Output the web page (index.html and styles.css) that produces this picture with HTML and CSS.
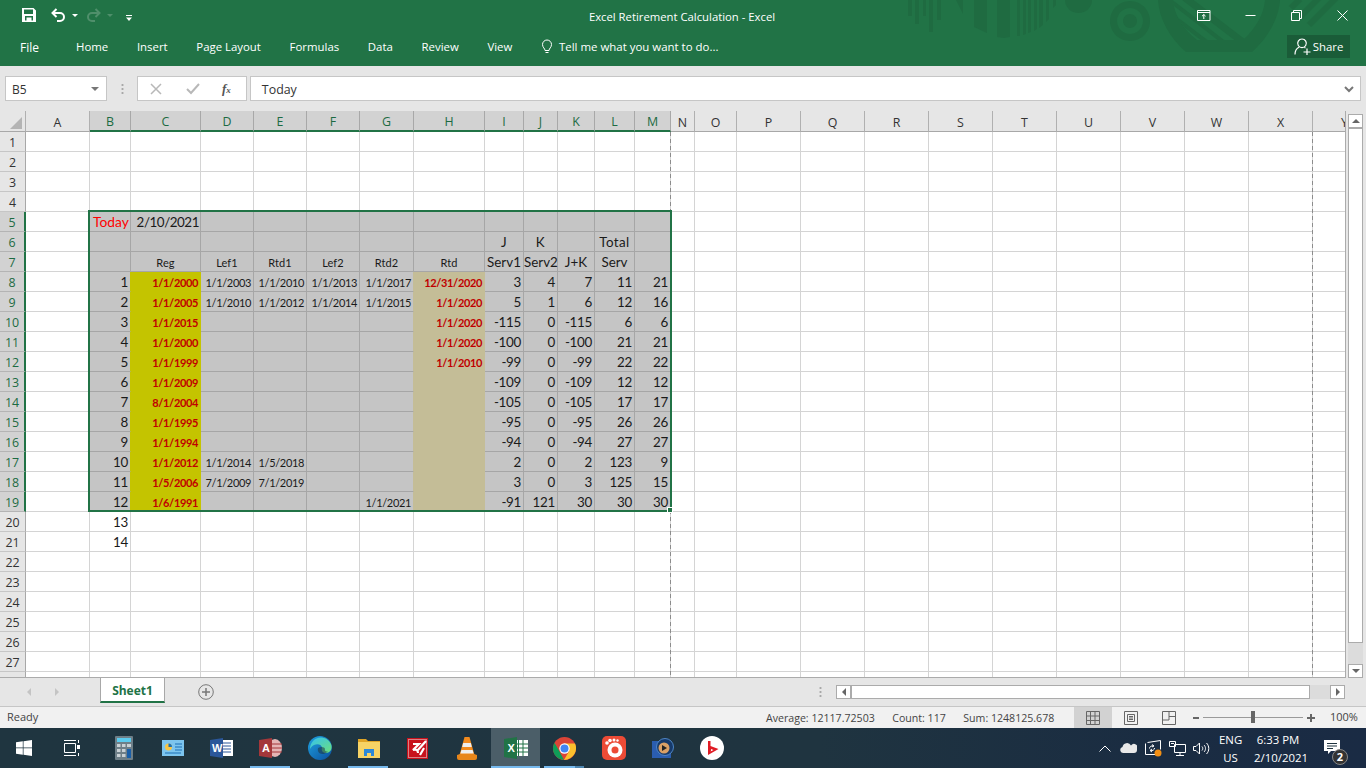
FILE: index.html
```html
<!DOCTYPE html>
<html lang="en">
<head>
<meta charset="utf-8">
<title>Excel Retirement Calculation - Excel</title>
<link rel="stylesheet" href="styles.css">
</head>
<body>
<header class="ribbon">
  <svg class="art" width="461" height="52" viewBox="905 0 461 52">
    <defs><clipPath id="inner"><path d="M1173 0h92c-1 14-9 28-22 40h-46c-14-11-23-25-24-40z"/></clipPath></defs>
    <g fill="#1f6b41">
      <rect x="908" width="4" height="16"/><rect x="915" width="4" height="24"/><rect x="923" width="3" height="16"/><rect x="929" width="4" height="32"/><rect x="937" width="4" height="20"/>
      <path d="M956 0h7v14z"/>
      <path d="M974 0h13v33l-13-6zM997 0h13v37l-6 1-7-1z"/>
      <path d="M1017 0h3v36h-3zM1023 0h3v34l-3 1zM1028 0h3v32l-3 1zM1034 0h3v29l-3 2zM1039 0h4v25l-4 3zM1046 0h3v19l-3 3zM1053 0h3v5l-3 3z"/>
      <path d="M1065 0h27a13.500 13 0 0 1-27 0z"/>
      <path fill-rule="evenodd" d="M1130 1a20 20 0 1 1-.01 0zM1130 8a13 13 0 1 0 .01 0zM1130 14a7 7 0 1 1-.01 0z"/>
      <path fill-rule="evenodd" d="M1158 0h122c-1 18-12 38-28 52h-66c-16-14-27-33-28-52zM1173 0c1 15 10 29 24 40h46c13-12 21-26 22-40z"/>
    </g>
    <g stroke="#1f6b41" fill="none" clip-path="url(#inner)">
      <path stroke-width="7" d="M1180-6l68 52"/>
      <path stroke-width="4" d="M1172 2l54 42"/>
      <path stroke-width="4" d="M1170 14l42 32"/>
    </g>
    <g stroke="#1f6b41" stroke-width="6" fill="none">
      <path d="M1291 8l9-9M1300 17l19-19M1309 25l28-28"/>
    </g>
  </svg>
  <div class="titlebar">
    <div class="qat">
      <svg width="14" height="14" viewBox="0 0 14 14"><path fill="#fff" fill-rule="evenodd" d="M0 0h11.500L14 2.500V14H0zM2 1.500v4.500h9V1.500zM3 8v4.500h1.500V9.500h5v3H11V8z"/></svg>
      <svg class="undo" width="14" height="14" viewBox="0 0 14 14"><path fill="none" stroke="#fff" stroke-width="2" d="M5.500 1L1.500 5l4 4M2 5h7a4 4 0 0 1 0 8H6"/></svg>
      <span class="caret"></span>
      <svg class="redo" width="14" height="14" viewBox="0 0 14 14"><path fill="none" stroke="#4f8f6b" stroke-width="2" d="M8.500 1l4 4-4 4M12 5H5a4 4 0 0 0 0 8h3"/></svg>
      <span class="caret dim"></span>
      <svg class="more" width="6" height="6" viewBox="0 0 6 6"><path fill="#fff" d="M0 0h6v1H0zM0 2.500h6L3 6z"/></svg>
    </div>
    <div class="doc-title">Excel Retirement Calculation - Excel</div>
    <div class="win">
      <svg class="w-disp" width="14" height="11" viewBox="0 0 14 11"><path fill="none" stroke="#fff" d="M.5.500h12.500v10H.5zM.5 2.500h12.500M6.800 9V4.500M5 6.200l1.800-1.700 1.800 1.700"/></svg>
      <svg width="11" height="11" viewBox="0 0 11 11"><path stroke="#fff" d="M.5 5.500h10"/></svg>
      <svg width="11" height="11" viewBox="0 0 11 11"><path fill="none" stroke="#fff" d="M.5 2.500h8v8h-8zM2.500 2.500V.5h8v8h-2"/></svg>
      <svg width="11" height="11" viewBox="0 0 11 11"><path stroke="#fff" d="M.5.500l10 10M10.500.5l-10 10"/></svg>
    </div>
  </div>
  <nav class="tabs">
    <span class="file">File</span>
    <span>Home</span><span>Insert</span><span>Page Layout</span><span>Formulas</span><span>Data</span><span>Review</span><span>View</span>
    <span class="tell">
      <svg width="12" height="16" viewBox="0 0 12 16"><path fill="none" stroke="#fff" d="M4 11.500c0-2-2.500-3-2.500-6a4.500 4.500 0 0 1 9 0c0 3-2.500 4-2.500 6zM4.500 13.500h3"/></svg>
      Tell me what you want to do...
    </span>
    <span class="share">
      <svg width="17" height="17" viewBox="0 0 17 17"><path fill="none" stroke="#fff" stroke-width="1.200" d="M8 1a4.300 4.300 0 1 1-.01 0zM1 16.500c0-4 1.500-6 4-7.200M10.500 9.500l1 .5M9.500 14h7M13 10.500v6.500"/></svg>
      Share
    </span>
  </nav>
</header>

<section class="formula">
  <div class="namebox">B5<span class="nb-caret"></span></div>
  <div class="dots"></div>
  <div class="fx-box">
    <svg width="12" height="12" viewBox="0 0 12 12"><path fill="none" stroke="#b8b8b8" stroke-width="1.500" d="M1 1l10 10M11 1L1 11"/></svg>
    <svg width="14" height="12" viewBox="0 0 14 12"><path fill="none" stroke="#b8b8b8" stroke-width="2" d="M1 6l4 4 8-9"/></svg>
    <i class="fx">f<small>x</small></i>
  </div>
  <div class="input">Today<svg width="10" height="7" viewBox="0 0 10 7"><path fill="none" stroke="#777" stroke-width="2" d="M1 1l4 4 4-4"/></svg></div>
</section>

<main class="work">
  <div class="sheet">
    <table>
      <colgroup><col class="w26"><col class="w64"><col class="w41"><col class="w70"><col class="w53"><col class="w53"><col class="w53"><col class="w54"><col class="w71"><col class="w39"><col class="w34"><col class="w37"><col class="w40"><col class="w36"><col class="w24"><col class="w42"><col class="w64"><col class="w64"><col class="w64"><col class="w64"><col class="w64"><col class="w64"><col class="w64"><col class="w64"><col class="w64"><col class="w64"></colgroup>
      <thead>
        <tr><th class="corner"><span class="tri"></span></th><th>A</th><th class="on">B</th><th class="on">C</th><th class="on">D</th><th class="on">E</th><th class="on">F</th><th class="on">G</th><th class="on">H</th><th class="on">I</th><th class="on">J</th><th class="on">K</th><th class="on">L</th><th class="on">M</th><th>N</th><th>O</th><th>P</th><th>Q</th><th>R</th><th>S</th><th>T</th><th>U</th><th>V</th><th>W</th><th>X</th><th>Y</th></tr>
      </thead>
      <tbody>
        <tr><th>1<td><td><td><td><td><td><td><td><td><td><td><td><td><td><td><td><td><td><td><td><td><td><td><td><td></tr>
        <tr><th>2<td><td><td><td><td><td><td><td><td><td><td><td><td><td><td><td><td><td><td><td><td><td><td><td><td></tr>
        <tr><th>3<td><td><td><td><td><td><td><td><td><td><td><td><td><td><td><td><td><td><td><td><td><td><td><td><td></tr>
        <tr><th>4<td><td><td><td><td><td><td><td><td><td><td><td><td><td><td><td><td><td><td><td><td><td><td><td><td></tr>
        <tr class="s"><th>5<td><td class="today">Today<td class="big">2/10/2021<td><td><td><td><td><td><td><td><td><td><td><td><td><td><td><td><td><td><td><td><td></tr>
        <tr class="s"><th>6<td><td><td><td><td><td><td><td><td class="c">J<td class="c">K<td><td class="c">Total<td><td><td><td><td><td><td><td><td><td><td><td><td></tr>
        <tr class="s h"><th>7<td><td><td class="c">Reg<td class="c">Lef1<td class="c">Rtd1<td class="c">Lef2<td class="c">Rtd2<td class="c">Rtd<td class="c">Serv1<td class="c">Serv2<td class="c">J+K<td class="c">Serv<td><td><td><td><td><td><td><td><td><td><td><td><td></tr>
        <tr class="s d"><th>8<td><td>1<td>1/1/2000<td>1/1/2003<td>1/1/2010<td>1/1/2013<td>1/1/2017<td>12/31/2020<td>3<td>4<td>7<td>11<td>21<td><td><td><td><td><td><td><td><td><td><td><td><td></tr>
        <tr class="s d"><th>9<td><td>2<td>1/1/2005<td>1/1/2010<td>1/1/2012<td>1/1/2014<td>1/1/2015<td>1/1/2020<td>5<td>1<td>6<td>12<td>16<td><td><td><td><td><td><td><td><td><td><td><td><td></tr>
        <tr class="s d"><th>10<td><td>3<td>1/1/2015<td><td><td><td><td>1/1/2020<td>-115<td>0<td>-115<td>6<td>6<td><td><td><td><td><td><td><td><td><td><td><td><td></tr>
        <tr class="s d"><th>11<td><td>4<td>1/1/2000<td><td><td><td><td>1/1/2020<td>-100<td>0<td>-100<td>21<td>21<td><td><td><td><td><td><td><td><td><td><td><td><td></tr>
        <tr class="s d"><th>12<td><td>5<td>1/1/1999<td><td><td><td><td>1/1/2010<td>-99<td>0<td>-99<td>22<td>22<td><td><td><td><td><td><td><td><td><td><td><td><td></tr>
        <tr class="s d"><th>13<td><td>6<td>1/1/2009<td><td><td><td><td><td>-109<td>0<td>-109<td>12<td>12<td><td><td><td><td><td><td><td><td><td><td><td><td></tr>
        <tr class="s d"><th>14<td><td>7<td>8/1/2004<td><td><td><td><td><td>-105<td>0<td>-105<td>17<td>17<td><td><td><td><td><td><td><td><td><td><td><td><td></tr>
        <tr class="s d"><th>15<td><td>8<td>1/1/1995<td><td><td><td><td><td>-95<td>0<td>-95<td>26<td>26<td><td><td><td><td><td><td><td><td><td><td><td><td></tr>
        <tr class="s d"><th>16<td><td>9<td>1/1/1994<td><td><td><td><td><td>-94<td>0<td>-94<td>27<td>27<td><td><td><td><td><td><td><td><td><td><td><td><td></tr>
        <tr class="s d"><th>17<td><td>10<td>1/1/2012<td>1/1/2014<td>1/5/2018<td><td><td><td>2<td>0<td>2<td>123<td>9<td><td><td><td><td><td><td><td><td><td><td><td><td></tr>
        <tr class="s d"><th>18<td><td>11<td>1/5/2006<td>7/1/2009<td>7/1/2019<td><td><td><td>3<td>0<td>3<td>125<td>15<td><td><td><td><td><td><td><td><td><td><td><td><td></tr>
        <tr class="s d"><th>19<td><td>12<td>1/6/1991<td><td><td><td>1/1/2021<td><td>-91<td>121<td>30<td>30<td>30<td><td><td><td><td><td><td><td><td><td><td><td><td></tr>
        <tr><th>20<td><td>13<td><td><td><td><td><td><td><td><td><td><td><td><td><td><td><td><td><td><td><td><td><td><td></tr>
        <tr><th>21<td><td>14<td><td><td><td><td><td><td><td><td><td><td><td><td><td><td><td><td><td><td><td><td><td><td></tr>
        <tr><th>22<td><td><td><td><td><td><td><td><td><td><td><td><td><td><td><td><td><td><td><td><td><td><td><td><td></tr>
        <tr><th>23<td><td><td><td><td><td><td><td><td><td><td><td><td><td><td><td><td><td><td><td><td><td><td><td><td></tr>
        <tr><th>24<td><td><td><td><td><td><td><td><td><td><td><td><td><td><td><td><td><td><td><td><td><td><td><td><td></tr>
        <tr><th>25<td><td><td><td><td><td><td><td><td><td><td><td><td><td><td><td><td><td><td><td><td><td><td><td><td></tr>
        <tr><th>26<td><td><td><td><td><td><td><td><td><td><td><td><td><td><td><td><td><td><td><td><td><td><td><td><td></tr>
        <tr><th>27<td><td><td><td><td><td><td><td><td><td><td><td><td><td><td><td><td><td><td><td><td><td><td><td><td></tr>
        <tr><th><td><td><td><td><td><td><td><td><td><td><td><td><td><td><td><td><td><td><td><td><td><td><td><td><td></tr>
      </tbody>
    </table>
    <div class="brk b1"></div>
    <div class="brk b2"></div>
    <div class="range"><span class="handle"></span></div>
  </div>
  <aside class="vscroll">
    <span class="sbtn"><i class="up"></i></span>
    <span class="vthumb"></span>
    <span class="vtrack"></span>
    <span class="sbtn"><i class="down"></i></span>
  </aside>
</main>

<section class="sheetbar">
  <i class="nav left"></i><i class="nav right"></i>
  <div class="tab">Sheet1</div>
  <svg class="add" width="16" height="16" viewBox="0 0 16 16"><circle cx="8" cy="8" r="7.300" fill="none" stroke="#777"/><path stroke="#777" stroke-width="1.500" d="M4 8h8M8 4v8"/></svg>
  <div class="split"></div>
  <div class="hscroll">
    <span class="hbtn"><i class="left"></i></span>
    <span class="hthumb"></span>
    <span class="htrack"></span>
    <span class="hbtn"><i class="right"></i></span>
  </div>
</section>

<footer class="status">
  <span class="ready">Ready</span>
  <span class="stat s1">Average: 12117.72503</span>
  <span class="stat">Count: 117</span>
  <span class="stat">Sum: 1248125.678</span>
  <span class="view on"><svg width="14" height="14" viewBox="0 0 14 14"><path fill="none" stroke="#666" d="M.5.500h13v13H.5zM.5 5h13M.5 9.500h13M4.500.5v13M9 .5v13"/></svg></span>
  <span class="view"><svg width="14" height="14" viewBox="0 0 14 14"><path fill="none" stroke="#666" d="M.5.500h13v13H.5zM3.500 3.500h7v7h-7zM5 5.500h4M5 7h4M5 8.500h4"/></svg></span>
  <span class="view"><svg width="14" height="14" viewBox="0 0 14 14"><path fill="none" stroke="#666" d="M.5.500h13v13H.5zM.5 9h6.500V.5M7 5.500h6.500" /></svg></span>
  <span class="zoom">
    <b class="zm"></b><span class="zline"><span class="zthumb"></span></span><b class="zp"></b>
  </span>
  <span class="pct">100%</span>
</footer>

<footer class="taskbar">
  <span class="tb first"><svg width="16" height="16" viewBox="0 0 16 16"><path fill="#fff" d="M0 2.300l6.800-1v6.300H0zM7.500 1.200L16 0v7.600H7.500zM0 8.300h6.800v6.400l-6.800-1zM7.500 8.300H16V16l-8.500-1.200z"/></svg></span>
  <span class="tb first"><svg width="17" height="16" viewBox="0 0 17 16"><path fill="none" stroke="#fff" d="M.5 3.500h11v9H.5zM0 .5h12M0 15.500h12M14.500 0v3M14.500 13v3"/><rect x="13" y="5" width="3" height="4" fill="#fff"/></svg></span>
  <span class="tb gap"><svg width="18" height="24" viewBox="0 0 18 24"><rect width="18" height="24" rx="1" fill="#6e7f88"/><rect x="2" y="2" width="14" height="4" fill="#5ccbee"/><g fill="#c9d1d5"><rect x="2" y="8" width="3.500" height="3"/><rect x="7" y="8" width="3.500" height="3"/><rect x="12" y="8" width="4" height="3"/><rect x="2" y="13" width="3.500" height="3"/><rect x="7" y="13" width="3.500" height="3"/><rect x="2" y="18" width="3.500" height="3"/><rect x="7" y="18" width="3.500" height="3"/></g><rect x="12" y="13" width="4" height="9" fill="#1a5fa8"/></svg></span>
  <span class="tb"><svg width="22" height="16" viewBox="0 0 22 16"><rect width="22" height="16" fill="#7cc4ee"/><circle cx="6.500" cy="7" r="3.500" fill="#f6c445"/><path fill="#1a6fb5" d="M6.500 7V3.500A3.500 3.500 0 0 1 10 7z"/><path stroke="#1a6fb5" d="M13 4h7M13 7h7M13 10h7M3 13h16"/></svg></span>
  <span class="tb"><svg width="23" height="20" viewBox="0 0 23 20"><rect x="7" y="2" width="16" height="16" fill="#fff"/><path stroke="#2b579a" d="M13 5h8M13 8h8M13 11h8M13 14h8"/><path fill="#2b579a" d="M0 2l13-2v20L0 18z"/><text class="ico-t" x="2" y="14" fill="#fff">W</text></svg></span>
  <span class="tb"><svg width="23" height="20" viewBox="0 0 23 20"><ellipse cx="16" cy="10" rx="7" ry="9" fill="#e4b5b5"/><path stroke="#a4373a" d="M10 6h13M10 10h13M10 14h13"/><path fill="#a4373a" d="M0 2l13-2v20L0 18z"/><text class="ico-t" x="3" y="14" fill="#fff">A</text></svg></span>
  <span class="tb"><svg width="24" height="24" viewBox="0 0 24 24"><defs><linearGradient id="e1" x1="0" y1="0" x2="1" y2="1"><stop offset="0" stop-color="#1fa2e0"/><stop offset="1" stop-color="#0b4f9e"/></linearGradient><linearGradient id="e2" x1="0" y1="0" x2="1" y2="1"><stop offset="0" stop-color="#35c1f1"/><stop offset="1" stop-color="#6ce07a"/></linearGradient></defs><circle cx="12" cy="12" r="12" fill="url(#e1)"/><path fill="url(#e2)" d="M5 5C9 0 19 0 23 8c2 5-1 9-5 9-3 0-5-2-4-5 0-3-4-5-8-3-2 1-3 2-4 4C2 10 3 7 5 5z"/><path fill="#1f3440" d="M10 12c3-2 7-1 7 1-1 2 2 3 3 2-4 5-9 3-10 0-.3-1-.2-2 0-3z" opacity=".55"/></svg></span>
  <span class="tb"><svg width="22" height="20" viewBox="0 0 22 20"><path fill="#e0a526" d="M0 1h8l2 2h12v4H0z"/><rect y="4" width="22" height="16" fill="#f6d365"/><path fill="#2b88d8" d="M6 11h10v7h-3v-3H9v3H6z"/></svg></span>
  <span class="tb"><svg width="21" height="21" viewBox="0 0 21 21"><rect width="21" height="21" fill="#c8121c"/><rect x="1.500" y="1.500" width="18" height="18" fill="none" stroke="#eee" stroke-dasharray="1 1"/><path fill="none" stroke="#fff" stroke-width="2.200" d="M6 6h6l-6 6c3-1 5 0 5 3M19 3L10 13M17 10l-4 7"/></svg></span>
  <span class="tb"><svg width="20" height="23" viewBox="0 0 20 23"><path fill="#f28b1e" d="M7.500 0h5l5 18H2.500z"/><path fill="#eee" d="M6.200 6h7.600l1 4H5.200zM4.400 13h11.200l1 3.500H3.400z"/><path fill="#e8861a" d="M0 18l3-1h14l3 1v3a2 2 0 0 1-2 2H2a2 2 0 0 1-2-2z"/></svg></span>
  <span class="tb active"><svg width="24" height="22" viewBox="0 0 24 22"><rect x="9" y="3" width="15" height="16" fill="#fff"/><path stroke="#217346" d="M14.500 3v16M19 3v16M13 7h11M13 11h11M13 15h11"/><path fill="#217346" d="M0 2l13-2v22L0 20z"/><text class="ico-t" x="3.500" y="15" fill="#fff">X</text></svg></span>
  <span class="tb open"><svg width="23" height="23" viewBox="0 0 23 23"><circle cx="11.500" cy="11.500" r="11.500" fill="#db4437"/><path fill="#0f9d58" d="M1.500 5.800l5 8.700 4.500 8.500C4 22.500 0 17 0 11.500c0-2 .5-4 1.500-5.700z"/><path fill="#fbc02d" d="M11.500 6.500H22c1.500 3 1.400 7-.3 10-1.800 3.500-6 6.500-10.700 6.500l5-8.700z"/><circle cx="11.500" cy="11.500" r="5.200" fill="#fff"/><circle cx="11.500" cy="11.500" r="4" fill="#4285f4"/></svg></span>
  <span class="tb"><svg width="24" height="24" viewBox="0 0 24 24"><rect width="24" height="24" rx="5" fill="#ec4b36"/><circle cx="13" cy="14" r="7.500" fill="#fff"/><circle cx="13" cy="14" r="3.500" fill="#ec4b36"/><g fill="#fff"><circle cx="5" cy="7" r="1.800"/><circle cx="8" cy="4.500" r="1.800"/><circle cx="12" cy="4" r="1.500"/><circle cx="15.500" cy="4.500" r="1.200"/></g></svg></span>
  <span class="tb"><svg width="22" height="22" viewBox="0 0 22 22"><rect y="4" width="19" height="17" fill="#2a5db0"/><circle cx="13" cy="10" r="8.500" fill="#163a6b" stroke="#4f86c6"/><circle cx="12" cy="11" r="5.500" fill="#d9a066"/><path fill="#222" d="M10 8l5 3-5 3z"/></svg></span>
  <span class="tb"><svg width="24" height="24" viewBox="0 0 24 24"><circle cx="12" cy="12" r="12" fill="#fff"/><path fill="#e01b24" d="M8 5l2.500 0 0 5 8 3-10.500 6z"/><path fill="#fff" d="M11 14.500l-.5 1 3-1.500-2.500-1z"/></svg></span>
  <div class="tray">
    <svg width="12" height="7" viewBox="0 0 12 7"><path fill="none" stroke="#fff" d="M.5 6.500L6 1l5.500 5.500"/></svg>
    <svg width="17" height="10" viewBox="0 0 17 10"><path fill="#e8e8e8" d="M3 10a3 3 0 0 1-.5-5.900A4.500 4.500 0 0 1 11 2.600 3.700 3.700 0 0 1 17 7c0 1.800-1.200 3-3 3z"/></svg>
    <svg class="t3" width="17" height="17" viewBox="0 0 17 17"><path fill="none" stroke="#fff" d="M2.500 2.500l13-2v9M.5 3.500v11h10M4.500 8.500c0-2 2-3 4-2.500M9.500 8c0 2-2 3-4 2.500M7 4.500l2 1.500-2 1M7 9l-2 1.500 2 1.500"/><circle cx="13" cy="13" r="3.500" fill="#f39015"/></svg>
    <svg class="t4" width="17" height="15" viewBox="0 0 17 15"><path fill="none" stroke="#fff" d="M5.500 3.500h11v8h-11zM11 11.500v3M7 14.500h8M.5.500h6v5h-6zM2 2.500h3"/></svg>
    <svg class="t5" width="17" height="13" viewBox="0 0 17 13"><path fill="none" stroke="#fff" d="M.5 4.500h2.500L6.500 1v11L3 8.500H.5zM9 4.500c1 1 1 3 0 4M11 3c2 2 2 5 0 7M13.500 1c3 3 3 8 0 11"/></svg>
    <span class="lang">ENG<br>US</span>
    <span class="clock">6:33 PM<br>2/10/2021</span>
    <span class="note"><svg width="16" height="15" viewBox="0 0 16 15"><path fill="#fff" d="M0 0h16v11H7l-3 3v-3H0z"/><path stroke="#1f3440" d="M3 3.500h10M3 6h10M3 8.500h6"/></svg><b class="badge">2</b></span>
  </div>
</footer>
</body>
</html>
```
FILE: styles.css
```css
* { box-sizing: border-box; }
html, body { margin: 0; height: 768px; overflow: hidden; }
body { width: 1366px; display: flex; flex-direction: column; font-family: "Open Sans", "Noto Sans", sans-serif; font-size: 11.5px; color: #333; background: #e6e6e6; }

/* ribbon */
.ribbon { position: relative; height: 66px; flex: none; background: #217346; color: #fff; }
.art { position: absolute; top: 0; left: 905px; }
.titlebar { position: relative; height: 33px; display: grid; grid-template-columns: 1fr auto 1fr; align-items: center; }
.qat { display: flex; align-items: center; padding-left: 22px; margin-top: -3px; }
.qat .undo { margin-left: 15px; }
.caret { width: 0; height: 0; border: 3px solid transparent; border-top-color: #fff; border-bottom-width: 0; margin-left: 7px; }
.caret.dim { border-top-color: #4f8f6b; margin-left: 6px; }
.qat .redo { margin-left: 9px; }
.qat .more { margin-left: 13px; margin-top: 5px; }
.doc-title { font-size: 11.3px; margin-left: -2px; }
.win { display: flex; align-items: center; justify-content: flex-end; margin-top: -3px; padding-right: 18px; gap: 35px; }
.w-disp { margin-right: -1px; }
.tabs { position: relative; height: 33px; display: flex; align-items: center; gap: 28.7px; font-size: 11.4px; padding-left: 76px; padding-bottom: 6px; }
.tabs .file { position: absolute; left: 20px; top: 6px; font-size: 12px; }
.tell { display: flex; align-items: center; gap: 6px; font-size: 11.45px; }
.share { position: absolute; left: 1287px; top: 2px; width: 63px; height: 23px; background: #1a5c38; display: flex; align-items: center; justify-content: center; gap: 2px; font-size: 11.4px; }

/* formula bar */
.formula { height: 45px; flex: none; display: flex; padding: 10px 5px 10px; font-size: 12px; }
.namebox, .fx-box, .input { height: 25px; background: #fff; border: 1px solid #c6c6c6; display: flex; align-items: center; }
.namebox { width: 102px; padding: 1px 6px 0; color: #333; }
.nb-caret { margin-left: auto; width: 0; height: 0; border: 4px solid transparent; border-top-color: #777; border-bottom-width: 0; margin-right: 1px; }
.dots { width: 3px; height: 12px; margin: 7px 13px 0 14px; background: radial-gradient(circle, #a8a8a8 1px, transparent 1.200px) 0 0 / 3px 4px; }
.fx-box { width: 110px; padding-left: 12px; gap: 24px; }
.fx { font-family: "Liberation Serif", serif; font-size: 13px; color: #555; margin-left: -2px; font-weight: bold; }
.fx small { font-size: 9px; }
.input { width: 1112px; margin-left: 3px; padding: 1px 6px 0 11px; font-size: 12.4px; justify-content: space-between; }

/* sheet */
.work { height: 567px; flex: none; display: flex; overflow: hidden; background: #e6e6e6; }
.sheet { position: relative; width: 1346px; height: 567px; overflow: hidden; flex: none; border-right: 1px solid #ababab; border-bottom: 1px solid #ababab; background: #fff; }
table { table-layout: fixed; width: 1543px; border-collapse: separate; border-spacing: 0; font-family: Lato, "Liberation Sans", sans-serif; font-size: 13.4px; color: #1a1a1a; background: #fff; }
.w24 { width: 24px; } .w26 { width: 26px; } .w34 { width: 34px; } .w36 { width: 36px; } .w37 { width: 37px; } .w39 { width: 39px; } .w40 { width: 40px; } .w41 { width: 41px; } .w42 { width: 42px; } .w53 { width: 53px; } .w54 { width: 54px; } .w64 { width: 64px; } .w70 { width: 70px; } .w71 { width: 71px; }
thead tr { height: 21px; }
tbody tr { height: 20px; }
thead th { background: #e6e6e6; border-right: 1px solid #b0b0b0; border-bottom: 1px solid #a8a8a8; padding: 2px 0 0; font: 400 12.4px "Open Sans", sans-serif; line-height: 17px; color: #333; overflow: hidden; }
.corner { position: relative; }
.tri { position: absolute; right: 3px; bottom: 2px; width: 0; height: 0; border-style: solid; border-width: 0 0 12px 12px; border-color: transparent transparent #b4b4b4 transparent; }
thead th.on { background: #d2d2d2; color: #1c6b42; border-bottom: 2px solid #217346; border-right-color: #a8a8a8; }
tbody th { background: #e6e6e6; border-right: 1px solid #a8a8a8; border-bottom: 1px solid #c6c6c6; font: 400 12.4px "Open Sans", sans-serif; line-height: 17px; color: #333; text-align: center; padding: 2px 0 0; }
td { border-right: 1px solid #d4d4d4; border-bottom: 1px solid #d4d4d4; padding: 1px 2px 0 0; text-align: right; white-space: nowrap; overflow: hidden; line-height: 18px; height: 20px; letter-spacing: -.3px; }
td:empty { padding: 0; }

tr.s th { background: #d2d2d2; color: #1c6b42; border-right: 2px solid #217346; border-bottom-color: #b4b4b4; }
tr.s td:nth-child(n+3):nth-child(-n+14) { background: #c5c5c5; border-color: #a6a6a6; }
tr.s td.today { background: #fff; color: #f00; text-align: left; padding-left: 3px; font-size: 13.8px; letter-spacing: 0; }
td.big { padding-right: 1px; letter-spacing: -.45px; }
td.c { text-align: center; padding: 1px 0 0; letter-spacing: .4px; overflow: visible; }
tr.h td.c { letter-spacing: 0; }
tr.h td.c:nth-child(n+4):nth-child(-n+9) { font-size: 11px; letter-spacing: .1px; padding-top: 2px; line-height: 17px; }
tr.d td:nth-child(n+5):nth-child(-n+8) { font-size: 11px; letter-spacing: -.35px; padding-top: 2px; line-height: 17px; }
tr.d td:nth-child(4), tr.d td:nth-child(9) { font-size: 11px; font-weight: 700; color: #c00000; letter-spacing: -.35px; padding-top: 2px; line-height: 17px; }
tr.d td:empty { padding: 0; }
tr.d td:nth-child(3) { border-right-color: #c4c400 !important; }
tr.d td:nth-child(8) { border-right-color: #c4bd97 !important; }
tr.d td:nth-child(4) { background: #c4c400 !important; border-color: #c4c400 !important; }
tr.d td:nth-child(9) { background: #c4bd97 !important; border-color: #c4bd97 !important; }

.brk { position: absolute; width: 1px; top: 21px; bottom: 0; background: repeating-linear-gradient(#8c8c8c 0 4px, transparent 4px 7px); }
.b1 { left: 670px; }
.b2 { left: 1312px; }
.range { position: absolute; left: 88px; top: 99px; width: 584px; height: 302px; border: 2px solid #217346; pointer-events: none; }
.handle { position: absolute; right: -3px; bottom: -3px; width: 6px; height: 6px; background: #217346; border: 1px solid #fff; }

/* vertical scrollbar */
.vscroll { width: 20px; flex: none; background: #e6e6e6; display: flex; flex-direction: column; padding: 3px 3px 0 2px; }
.sbtn { height: 14px; background: #fff; border: 1px solid #ababab; display: flex; align-items: center; justify-content: center; flex: none; }
.vthumb { height: 515px; background: #fff; border: 1px solid #ababab; flex: none; }
.vtrack { height: 21px; background: #dcdcdc; flex: none; }
.up, .down, .left, .right { display: block; width: 0; height: 0; border: 4px solid transparent; }
.up { border-top-width: 0; border-bottom-color: #666; }
.down { border-bottom-width: 0; border-top-color: #666; }
.left { border-left-width: 0; border-right-color: #666; }
.right { border-right-width: 0; border-left-color: #666; }

/* sheet tabs */
.sheetbar { height: 29px; flex: none; display: flex; align-items: flex-start; position: relative; background: #e6e6e6; border-bottom: 1px solid #c6c6c6; }
.nav { margin-top: 10px; }
.nav.left { margin-left: 27px; border-right-color: #c4c4c4; }
.nav.right { margin-left: 24px; border-left-color: #c4c4c4; }
.tab { margin-left: 41px; width: 65px; height: 25px; background: #fff; border: 1px solid #a8a8a8; border-top: 0; border-bottom: 2px solid #217346; text-align: center; font: 700 12px/25px "Open Sans", sans-serif; color: #217346; }
.add { margin: 6px 0 0 33px; }
.split { position: absolute; left: 819px; top: 8px; width: 3px; height: 12px; background: radial-gradient(circle, #a8a8a8 1px, transparent 1.200px) 0 0 / 3px 4px; }
.hscroll { position: absolute; left: 836px; top: 7px; width: 509px; height: 14px; display: flex; }
.hbtn { width: 15px; height: 14px; background: #fff; border: 1px solid #ababab; display: flex; align-items: center; justify-content: center; flex: none; }
.hthumb { width: 459px; height: 14px; background: #fff; border: 1px solid #ababab; flex: none; }
.htrack { flex: 1; height: 14px; background: #dcdcdc; }

/* status */
.status { height: 21px; flex: none; background: #f1f1f1; display: flex; align-items: center; font-size: 10.6px; color: #444; position: relative; }
.ready { margin: -2px 723px 0 7px; font-size: 11px; width: 36px; }
.stat { margin-right: 17.500px; white-space: nowrap; }
.view { position: absolute; top: 0; width: 38px; height: 21px; display: flex; align-items: center; justify-content: center; }
.view svg { display: block; }
.view.on { left: 1074px; background: #d2d2d2; }
.view:nth-of-type(6) { left: 1112px; }
.view:nth-of-type(7) { left: 1150px; }
.zoom { position: absolute; left: 1192px; top: 0; height: 21px; width: 124px; display: flex; align-items: center; }
.zm { width: 6px; height: 2px; background: #666; margin-left: 1px; }
.zline { position: relative; width: 100px; height: 1px; background: #9a9a9a; margin-left: 4px; display: block; }
.zthumb { position: absolute; left: 48px; top: -6px; width: 4px; height: 12px; background: #666; }
.zp { position: relative; width: 8px; height: 2px; background: #666; margin-left: 4px; }
.zp::after { content: ""; position: absolute; left: 3px; top: -3px; width: 2px; height: 8px; background: #666; }
.pct { position: absolute; left: 1330px; top: 2px; font-size: 11px; }

/* taskbar */
.taskbar { height: 40px; flex: none; background: linear-gradient(90deg, #1f3540, #1f3440 60%, #1a2c42 85%, #1a2b44); display: flex; align-items: center; color: #fff; position: relative; }
.tb { position: relative; width: 49px; height: 40px; display: flex; align-items: center; justify-content: center; flex: none; }
.tb.first { width: 48px; }
.tb.gap { margin-left: 3px; }
.tb svg { display: block; }
.tb:nth-of-type(6)::after, .tb:nth-of-type(8)::after, .tb.open::after { content: ""; position: absolute; left: 4px; width: 40px; bottom: 0; height: 2px; background: #76b9ed; }
.tb.open::after { background: linear-gradient(90deg, #76b9ed 31px, #4d86b0 31px); }
.tb.active { background: #4b5e68; box-shadow: inset 0 -2px 0 #76b9ed; }
.ico-t { font: 700 11px "Liberation Sans", sans-serif; }
.tray { position: absolute; left: 1099px; top: 0; right: 0; height: 40px; display: flex; align-items: center; font-size: 11.4px; line-height: 18px; text-align: center; }
.tray svg:nth-child(2) { margin-left: 9px; }
.t3 { margin-left: 8px; }
.t4 { margin-left: 7px; }
.t5 { margin-left: 7px; }
.lang { position: absolute; left: 120px; top: 3px; }
.clock { position: absolute; left: 155px; top: 3px; width: 48px; white-space: nowrap; display: block; text-align: center; }
.note { position: absolute; left: 225px; top: 12px; }
.badge { position: absolute; left: 8px; top: 9px; width: 16px; height: 16px; border-radius: 50%; background: #333; border: 1px solid #888; color: #fff; font: 700 11px/14px "Open Sans", sans-serif; text-align: center; }
```
